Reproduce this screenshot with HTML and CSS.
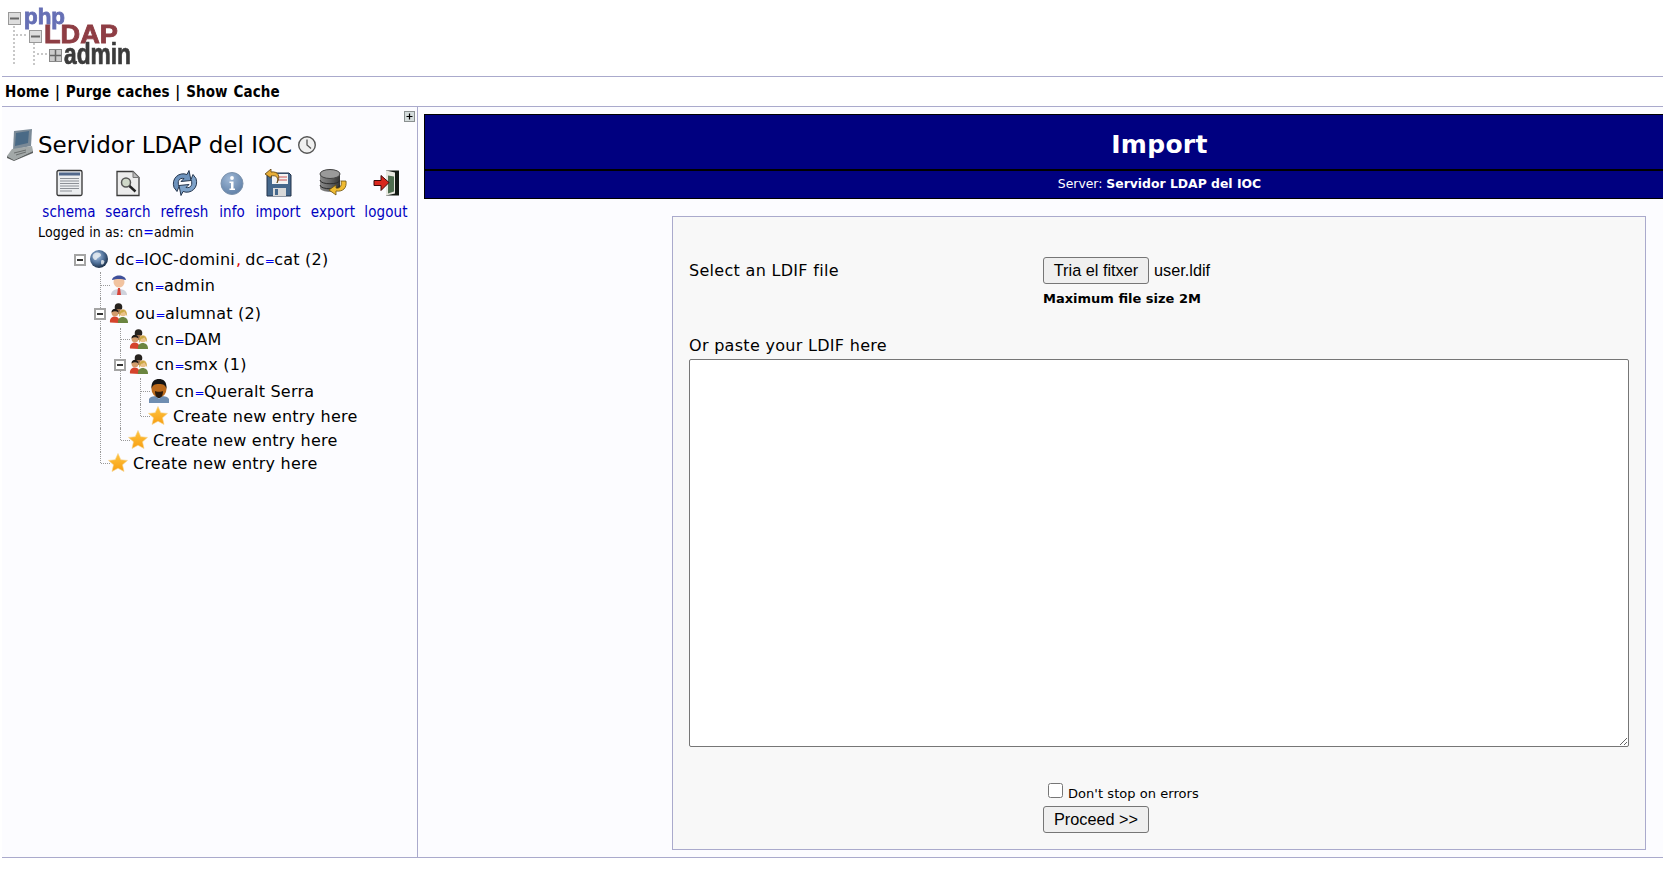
FILE: index.html
```html
<!DOCTYPE html>
<html lang="en">
<head>
<meta charset="utf-8">
<title>phpLDAPadmin</title>
<link rel="stylesheet" href="styles.css">
</head>
<body>
<svg class="defs" width="0" height="0" aria-hidden="true">
  <defs>
    <filter id="soft"><feGaussianBlur stdDeviation="0.4"/></filter>
    <linearGradient id="gStar" x1="0" y1="0" x2="0" y2="1"><stop offset="0" stop-color="#ffc540"/><stop offset="1" stop-color="#f79e12"/></linearGradient>
    <radialGradient id="gGlobe" cx=".4" cy=".35" r=".7"><stop offset="0" stop-color="#a9c4e4"/><stop offset=".55" stop-color="#4f7099"/><stop offset="1" stop-color="#14263c"/></radialGradient>
    <radialGradient id="gInfo" cx=".4" cy=".3" r=".8"><stop offset="0" stop-color="#9fb8d6"/><stop offset="1" stop-color="#5a7ba3"/></radialGradient>
    <linearGradient id="gDb" x1="0" y1="0" x2="1" y2="0"><stop offset="0" stop-color="#8a8a8a"/><stop offset=".5" stop-color="#666"/><stop offset="1" stop-color="#333"/></linearGradient>
    <symbol id="i-star" viewBox="0 0 20 20"><path d="M10 .5l2.800 6.200 6.700.7-5 4.400 1.500 6.700L10 15.200l-6 3.300 1.500-6.700-5-4.400 6.700-.7z" fill="url(#gStar)" stroke="#f6d48c" stroke-width=".6"/></symbol>
    <symbol id="i-group" viewBox="0 0 20 20">
      <circle cx="9.500" cy="4" r="3.800" fill="#27231f"/><path d="M7 6h5v5H7z" fill="#9c6f4c"/>
      <path d="M1 19.500c-1.200-7 8.500-8 9.500-2l-.5 2.500z" fill="#d5432c"/>
      <circle cx="6" cy="9.800" r="3.500" fill="#d39c6c"/><path d="M2.500 9.500c0-5 7-5 7 0-2-1.600-5-1.600-7 0z" fill="#1d1a18"/>
      <path d="M9 20c-1.200-8 10.500-8 10 0z" fill="#6b8540"/>
      <circle cx="14" cy="9.800" r="3.500" fill="#ebc28a"/><path d="M10.200 14c-.7-9.500 7.800-9.500 8-.5-1-1.500-1.200-3.500-3-5.300-1 1-2.200 1.500-3.200 1.600-.5 1.700-1 3-1.800 4.200z" fill="#c9a742"/>
    </symbol>
  </defs>
</svg>

<header class="brand">
  <svg class="logo" width="140" height="75" viewBox="0 0 140 75" role="img" aria-label="phpLDAPadmin">
    <g filter="url(#soft)">
      <path d="M14 26v38M16 35h12M34 43v22M37 54h11" stroke="#c8c8c8" stroke-width="2" stroke-dasharray="2 2" fill="none"/>
      <rect x="8.500" y="12.500" width="12" height="12" fill="#ddd" stroke="#999"/><path d="M10 18.500h9" stroke="#666" stroke-width="2"/>
      <rect x="29.500" y="30.500" width="12" height="12" fill="#ddd" stroke="#999"/><path d="M31 36.500h9" stroke="#666" stroke-width="2"/>
      <rect x="49.500" y="49.500" width="12" height="12" fill="#ccc" stroke="#888"/><path d="M50 55.500h11M55.500 50v11" stroke="#666" stroke-width="1.500"/>
      <text class="logo-php" x="24" y="24" textLength="41" lengthAdjust="spacingAndGlyphs">php</text>
      <text class="logo-ldap" x="44" y="43" textLength="74" lengthAdjust="spacingAndGlyphs">LDAP</text>
      <text class="logo-admin" x="64" y="64" textLength="67" lengthAdjust="spacingAndGlyphs">admin</text>
    </g>
  </svg>
</header>
<nav class="menu"><a href="#">Home</a> | <a href="#">Purge caches</a> | <a href="#">Show Cache</a></nav>

<main class="main">
  <aside class="side">
    <div class="side-top"><span class="plus-btn"><svg width="11" height="11" viewBox="0 0 11 11"><rect x=".5" y=".5" width="10" height="10" fill="#d4dcdc" stroke="#8a9090"/><path d="M2.500 5.500h6M5.500 2.500v6" stroke="#000" stroke-width="1.200"/></svg></span></div>

    <h1 class="server">
      <svg class="server-ico" width="28" height="32" viewBox="0 0 28 32"><path d="M8 2l18-2-1 17-18 4z" fill="#7b8a97"/><path d="M10 4l13-2-1 12-13 3z" fill="#4a6a86"/><path d="M6 20l20-3 1 5-19 9-7-4z" fill="#a2a8a8"/><path d="M1 27l7 4 19-9v2L8 32l-7-3z" fill="#5c6060"/><path d="M8 24l12-3M10 26l10-3" stroke="#6a6e6e"/></svg>
      <span>Servidor LDAP del IOC</span>
      <svg class="clock" width="20" height="20" viewBox="0 0 20 20"><circle cx="10" cy="10" r="8.300" fill="#f0f0f0" stroke="#555" stroke-width="1.400"/><path d="M10 4.500V10l4 3.500" fill="none" stroke="#555" stroke-width="1.300"/></svg>
    </h1>

    <ul class="tools">
      <li class="tool t-schema"><svg width="27" height="27" viewBox="0 0 27 27"><rect x="1" y="1" width="25" height="25" rx="1.500" fill="#eceef0" stroke="#333" stroke-width="1.300"/><rect x="3" y="3" width="21" height="3" fill="#51688c"/><path d="M4 9h19M4 11.500h19M4 14h19M4 16.500h19M4 19h19M4 21.500h12" stroke="#8c9096"/></svg><a href="#">schema</a></li>
      <li class="tool t-search"><svg width="26" height="27" viewBox="0 0 26 27"><path d="M2 2h16l6 6v18H2z" fill="#ececec" stroke="#3a3a3a" stroke-width="1.300"/><path d="M18 2v6h6z" fill="#bbb" stroke="#777"/><circle cx="11" cy="13" r="4.500" fill="#cfd8c8" stroke="#555" stroke-width="1.500"/><path d="M14.500 16.500l6 5.500" stroke="#222" stroke-width="2.400"/></svg><a href="#">search</a></li>
      <li class="tool t-refresh"><svg width="28" height="27" viewBox="0 0 28 27"><path d="M3 18C0 9 8 2 16 5l2-4 2 10-10 1 3-3C8 8 6 12 8 17l-2 5z" fill="#6e93bd" stroke="#26374f"/><path d="M25 9c3 9-5 16-13 13l-2 4-2-10 10-1-3 3c5 1 7-3 5-8l2-5z" fill="#7ea2c9" stroke="#26374f"/></svg><a href="#">refresh</a></li>
      <li class="tool t-info"><svg width="24" height="27" viewBox="0 0 24 27"><circle cx="12" cy="14" r="11" fill="url(#gInfo)" stroke="#7d93ad"/><circle cx="12" cy="8.500" r="1.900" fill="#fff"/><path d="M9.500 12h4v7h1.500v1.500H9.500V19H11v-5.500H9.500z" fill="#fff"/></svg><a href="#">info</a></li>
      <li class="tool t-import"><svg width="28" height="28" viewBox="0 0 28 28"><path d="M3 4h22l2 2v21H3z" fill="#46688c" stroke="#22324a"/><rect x="8" y="5" width="16" height="10" fill="#f3f3f3"/><path d="M14 8h9M14 11h9" stroke="#c55"/><rect x="9" y="19" width="13" height="8" fill="#d9d9d9"/><rect x="11" y="20" width="3" height="6" fill="#46688c"/><path d="M13 14c2-6-1-8-6-7V9L1 5l6-5v3c7-1 10 4 6 11z" fill="#e6ad38" stroke="#5a4010" stroke-width=".8"/></svg><a href="#">import</a></li>
      <li class="tool t-export"><svg width="28" height="28" viewBox="0 0 28 28"><path d="M1 5v14c0 5 20 5 20 0V5z" fill="url(#gDb)"/><ellipse cx="11" cy="5" rx="10" ry="4.500" fill="#9a9a9a" stroke="#444"/><path d="M1 11c0 5 20 5 20 0M1 16c0 5 20 5 20 0" fill="none" stroke="#2c2c2c"/><path d="M27 12c1 7-3 11-10 10v4l-7-5 7-5v3c4 1 6-2 5-7z" fill="#f0bb32" stroke="#6a5010" stroke-width=".8"/></svg><a href="#">export</a></li>
      <li class="tool t-logout"><svg width="27" height="27" viewBox="0 0 27 27"><rect x="13" y="1" width="13" height="25" fill="#141a14"/><path d="M13 1l9 2v21l-9 2z" fill="#e8e8e0"/><path d="M15 6l6 1v15l-6 2z" fill="#4f6e4f"/><path d="M1 11h7V6l8 7-8 8v-5H1z" fill="#d9271d" stroke="#3a0a08"/></svg><a href="#">logout</a></li>
    </ul>

    <p class="logged">Logged in as: cn<b class="eq-sm">=</b>admin</p>

    <div class="tree">
      <div class="row r26"><span class="cell"><span class="exp"></span></span><svg class="ico" width="20" height="20" viewBox="0 0 20 20"><circle cx="10" cy="10" r="9" fill="url(#gGlobe)"/><path d="M6 4c3-1 6 0 6 2s-3 2-4 4-3 1-4-1 0-4 2-5zM13 11c2 0 3 1 2 3s-3 2-3 0 0-3 1-3z" fill="#eef1f4" opacity=".8"/></svg><a class="entry" href="#">dc<b class="eq">=</b>IOC-domini<b class="comma">,</b>dc<b class="eq">=</b>cat (2)</a></div>

      <div class="row r26"><span class="cell"></span><span class="cell tee"></span><svg class="ico" width="20" height="24" viewBox="0 0 20 22"><path d="M2 21c0-8 16-8 16 0z" fill="#cfd2dc"/><path d="M9 14h2l1 7H8z" fill="#d8453a"/><circle cx="10" cy="8" r="5.500" fill="#f1c3a0"/><path d="M3 6c1-6 13-6 14 0-4-1.500-10-1.500-14 0z" fill="#3e4f9a"/></svg><a class="entry" href="#">cn<b class="eq">=</b>admin</a></div>

      <div class="row r30"><span class="cell"></span><span class="cell line"><span class="exp"></span></span><svg class="ico" width="20" height="20"><use href="#i-group"/></svg><a class="entry" href="#">ou<b class="eq">=</b>alumnat (2)</a></div>

      <div class="row r22"><span class="cell"></span><span class="cell line"></span><span class="cell tee"></span><svg class="ico" width="20" height="20"><use href="#i-group"/></svg><a class="entry" href="#">cn<b class="eq">=</b>DAM</a></div>

      <div class="row r28"><span class="cell"></span><span class="cell line"></span><span class="cell line"><span class="exp"></span></span><svg class="ico" width="20" height="20"><use href="#i-group"/></svg><a class="entry" href="#">cn<b class="eq">=</b>smx (1)</a></div>

      <div class="row r26"><span class="cell"></span><span class="cell line"></span><span class="cell line"></span><span class="cell tee"></span><svg class="ico" width="20" height="24" viewBox="0 0 20 24"><path d="M0 24v-4c2-3 5-3 10-3s8 0 10 3v4z" fill="#6f8eb2"/><path d="M8 17l2 3 2-3z" fill="#dfe6ee"/><ellipse cx="10" cy="10" rx="7.500" ry="8.500" fill="#bb6a1c"/><path d="M2.500 10C2 2 6 0 10 0s8 2 7.500 10c-1-4-3-5-7.500-5s-6.500 1-7.500 5z" fill="#151515"/><path d="M6 12c1 1 7 1 8 0 0 5-2 7-4 7s-4-2-4-7z" fill="#2b1a0c"/></svg><a class="entry" href="#">cn<b class="eq">=</b>Queralt Serra</a></div>

      <div class="row r24"><span class="cell"></span><span class="cell line"></span><span class="cell line"></span><span class="cell elbow"></span><svg class="ico star" width="20" height="20"><use href="#i-star"/></svg><a class="entry tight" href="#">Create new entry here</a></div>

      <div class="row r24"><span class="cell"></span><span class="cell line"></span><span class="cell elbow"></span><svg class="ico star" width="20" height="20"><use href="#i-star"/></svg><a class="entry tight" href="#">Create new entry here</a></div>

      <div class="row r22"><span class="cell"></span><span class="cell elbow"></span><svg class="ico star" width="20" height="20"><use href="#i-star"/></svg><a class="entry tight" href="#">Create new entry here</a></div>
    </div>
  </aside>

  <section class="content">
    <div class="banner">
      <div class="banner-title">Import</div>
      <div class="banner-sub">Server: <b>Servidor LDAP del IOC</b></div>
    </div>
    <form class="panel">
      <div class="file-row">
        <label class="file-label">Select an LDIF file</label>
        <div class="file-col">
          <div class="file-pick"><button type="button" class="btn">Tria el fitxer</button><span class="file-name">user.ldif</span></div>
          <p class="max-size">Maximum file size 2M</p>
        </div>
      </div>
      <label class="paste-label" for="ldif">Or paste your LDIF here</label>
      <textarea class="ldif" id="ldif"></textarea>
      <div class="actions">
        <label class="check"><input type="checkbox"><span>Don't stop on errors</span></label>
        <button type="button" class="btn">Proceed &gt;&gt;</button>
      </div>
    </form>
  </section>
</main>
</body>
</html>
```

FILE: styles.css
```css
* { box-sizing: border-box; }
html, body { margin: 0; padding: 0; }
body {
  background: #fff;
  color: #000;
  font-family: "DejaVu Sans", Tahoma, sans-serif;
  font-size: 16px;
  overflow: hidden;
  height: 880px;
}
.defs { position: absolute; }
a { color: inherit; text-decoration: none; }

.brand { height: 77px; margin-left: 2px; border-bottom: 1px solid #aaaacc; }
.logo { display: block; margin-left: -2px; }
.logo-php { font-family: "Liberation Sans", sans-serif; font-weight: 700; font-size: 22px; fill: #666fb5; stroke: #666fb5; stroke-width: .8px; }
.logo-ldap { font-family: "Liberation Sans", sans-serif; font-weight: 700; font-size: 25px; fill: #8e3d44; stroke: #8e3d44; stroke-width: .8px; }
.logo-admin { font-family: "Liberation Sans", sans-serif; font-weight: 700; font-size: 29px; fill: #3b3b3b; stroke: #3b3b3b; stroke-width: .7px; }

.menu {
  height: 30px;
  margin-left: 2px;
  padding: 6px 0 0 3px;
  border-bottom: 1px solid #aaaacc;
  font-family: "DejaVu Sans", Tahoma, sans-serif;
  font-stretch: condensed;
  font-size: 15px;
  line-height: 18px;
  font-weight: 700;
  letter-spacing: .1px;
  word-spacing: 1px;
}

.main {
  display: flex;
  height: 751px;
  margin-left: 2px;
  background: #fcfcff;
  border-bottom: 1px solid #aaaacc;
}
.side {
  width: 416px;
  flex: none;
  border-right: 1px solid #aaaacc;
}
.side-top { display: flex; justify-content: flex-end; height: 21px; padding: 4px 2px 0 0; }
.plus-btn { display: block; height: 11px; }
.plus-btn svg { display: block; }

.server {
  display: flex;
  align-items: center;
  height: 32px;
  margin: 1px 0 0 4px;
  font-size: 23px;
  font-weight: 400;
  line-height: 32px;
}
.server-ico { margin-right: 4px; flex: none; }
.clock { margin-left: 5px; }

.tools {
  display: flex;
  list-style: none;
  margin: 8px 0 0 39px;
  padding: 0;
  font-size: 15px;
  font-stretch: condensed;
  letter-spacing: .1px;
}
.tool { display: flex; flex-direction: column; align-items: center; }
.tool svg { display: block; height: 28px; }
.tool a { color: #0000c0; margin-top: 5px; line-height: 20px; white-space: nowrap; }
.t-schema { width: 56px; }
.t-search { width: 62px; }
.t-refresh { width: 51px; }
.t-info { width: 44px; }
.t-import { width: 48px; }
.t-export { width: 62px; }
.t-logout { width: 44px; }

.logged { margin: 2px 0 0 36px; font-size: 14px; font-stretch: condensed; line-height: 17px; letter-spacing: .13px; }
.eq-sm { color: #0000ee; font-weight: 400; }
.eq { color: #0000ee; font-weight: 400; font-size: 12px; letter-spacing: -.5px; }
.comma { color: #e00000; font-weight: 400; margin: 0 4px 0 1px; }

.tree { margin: 5px 0 0 68px; font-size: 16px; letter-spacing: .22px; }
.row { display: flex; align-items: center; }
.r22 { height: 22px; }
.r24 { height: 24px; }
.r26 { height: 26px; }
.r28 { height: 28px; }
.r30 { height: 30px; }
.cell { position: relative; display: block; width: 20px; align-self: stretch; flex: none; }
.line::before, .tee::before, .elbow::before {
  content: "";
  position: absolute;
  left: 10px;
  top: 0;
  bottom: 0;
  border-left: 1px dotted #999;
}
.elbow::before { bottom: 50%; }
.tee::after, .elbow::after {
  content: "";
  position: absolute;
  left: 11px;
  right: 0;
  top: 50%;
  border-top: 1px dotted #999;
}
.exp {
  position: absolute;
  left: 4px;
  top: 50%;
  width: 12px;
  height: 12px;
  margin-top: -5px;
  background: #fff;
  border: 2px solid #a4a4a4;
}
.exp::after {
  content: "";
  position: absolute;
  left: 1px;
  right: 1px;
  top: 3px;
  height: 2px;
  background: #333;
}
.ico { flex: none; display: block; overflow: visible; margin-left: -1px; }
.ico.star { margin-left: -2px; }
.entry { margin-left: 6px; white-space: nowrap; color: #000; }
.entry.tight { margin-left: 5px; }

.content { flex: 1; min-width: 0; padding: 7px 0 0 6px; }
.banner {
  background: #000080;
  color: #fff;
  border: solid #000;
  border-width: 1px 0 1px 1px;
  text-align: center;
}
.banner-title {
  height: 56px;
  padding: 4px 0 0 231px;
  border-bottom: 2px solid #000;
  font-size: 25px;
  font-weight: 700;
  line-height: 52px;
  letter-spacing: .3px;
}
.banner-sub {
  height: 27px;
  padding-left: 231px;
  font-size: 12.4px;
  line-height: 25px;
}
.panel {
  margin: 17px 17px 0 248px;
  height: 634px;
  padding: 0 16px;
  background: #f8f8f8;
  border: 1px solid #aaaacc;
  letter-spacing: .3px;
}
.file-row { display: flex; padding-top: 40px; }
.file-label { width: 354px; flex: none; padding-top: 4px; line-height: 20px; }
.file-pick { display: flex; align-items: center; letter-spacing: 0; }
.btn {
  width: 106px;
  height: 27px;
  padding: 0;
  background: #efefef;
  border: 1px solid #767676;
  border-radius: 3px;
  color: #000;
  font-family: "Liberation Sans", Arial, sans-serif;
  font-size: 16.3px;
  letter-spacing: 0;
}
.file-name { margin-left: 5px; font-family: "Liberation Sans", Arial, sans-serif; font-size: 16.3px; }
.max-size { margin: 7px 0 0; font-size: 13px; font-weight: 700; line-height: 16px; letter-spacing: 0; }
.paste-label { display: block; margin-top: 29px; line-height: 20px; }
.ldif {
  display: block;
  width: 100%;
  height: 388px;
  margin-top: 3px;
  background: #fff;
  border: 1px solid #767676;
  border-radius: 2px;
  padding: 2px;
}
.actions { margin: 33px 0 0 354px; }
.check { display: flex; align-items: flex-end; height: 21px; font-size: 13px; line-height: 15px; letter-spacing: .05px; }
.check input { width: 15px; height: 15px; margin: 0 5px 3px 5px; }
.actions .btn { display: block; margin-top: 5px; }
```
